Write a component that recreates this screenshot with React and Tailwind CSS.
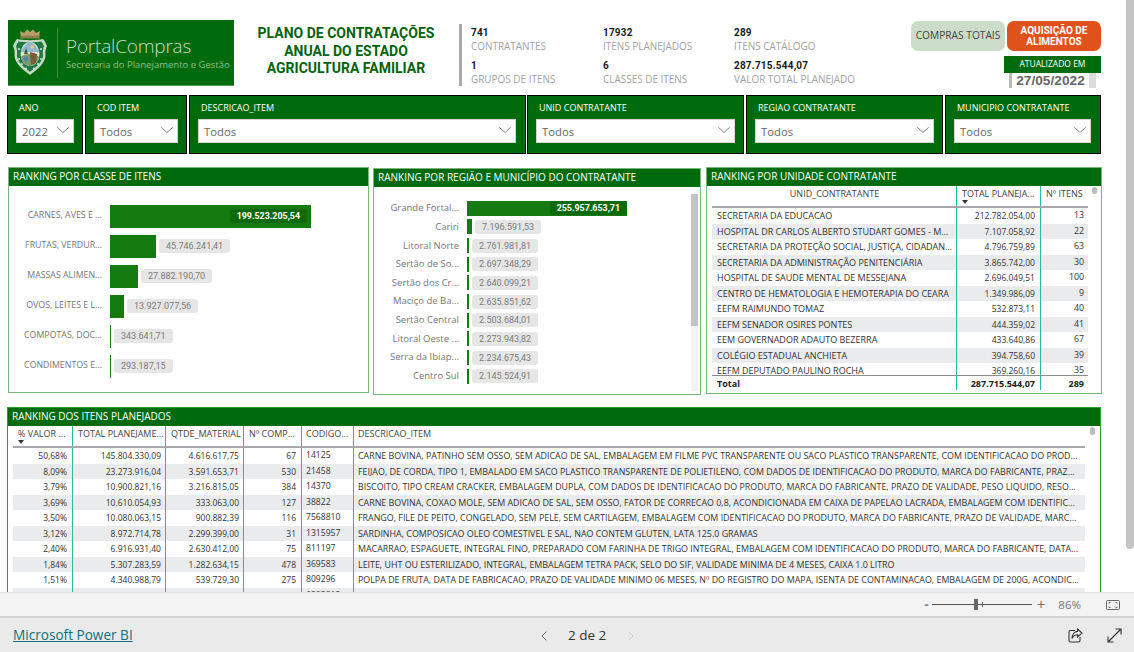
import React from "react";
import { ChevronLeft, ChevronRight } from "lucide-react";

const SEGOE = "font-['Open_Sans','Noto_Sans',sans-serif]";

const slicers = [
  { label: "ANO", value: "2022", outer: "w-[76px]", box: "w-[58px] ml-[8px]" },
  { label: "COD ITEM", value: "Todos", outer: "w-[102px] ml-[2px]", box: "w-[84px] ml-[8px]" },
  { label: "DESCRICAO_ITEM", value: "Todos", outer: "w-[337px] ml-[2px]", box: "w-[318px] ml-[8px]" },
  { label: "UNID CONTRATANTE", value: "Todos", outer: "w-[217px] ml-[1px]", box: "w-[199px] ml-[8px]" },
  { label: "REGIAO CONTRATANTE", value: "Todos", outer: "w-[197px] ml-[2px]", box: "w-[179px] ml-[8px]" },
  { label: "MUNICIPIO CONTRATANTE", value: "Todos", outer: "w-[156px] ml-[2px]", box: "w-[137px] ml-[8px]" },
];

const classes = [
  ["CARNES, AVES E ...", "w-[201px]", "199.523.205,54", true],
  ["FRUTAS, VERDUR...", "w-[46px]", "45.746.241,41"],
  ["MASSAS ALIMEN...", "w-[28px]", "27.882.190,70"],
  ["OVOS, LEITES E L...", "w-[14px]", "13.927.077,56"],
  ["COMPOTAS, DOC...", "w-[1px]", "343.641,71"],
  ["CONDIMENTOS E...", "w-[1px]", "293.187,15"],
];

const regions = [
  ["Grande Fortal...", "w-[160px]", "255.957.653,71", true],
  ["Cariri", "w-[5px]", "7.196.591,53"],
  ["Litoral Norte", "w-[2px]", "2.761.981,81"],
  ["Sertão de So...", "w-[2px]", "2.697.348,29"],
  ["Sertão dos Cr...", "w-[2px]", "2.640.099,21"],
  ["Maciço de Ba...", "w-[2px]", "2.635.851,62"],
  ["Sertão Central", "w-[2px]", "2.503.684,01"],
  ["Litoral Oeste ...", "w-[2px]", "2.273.943,82"],
  ["Serra da Ibiap...", "w-[2px]", "2.234.675,43"],
  ["Centro Sul", "w-[2px]", "2.145.524,91"],
];

const units = [
  ["SECRETARIA DA EDUCACAO", "212.782.054,00", "13"],
  ["HOSPITAL DR CARLOS ALBERTO STUDART GOMES - MESSEJANA", "7.107.058,92", "22"],
  ["SECRETARIA DA PROTEÇÃO SOCIAL, JUSTIÇA, CIDADANIA, MULHERES", "4.796.759,89", "63"],
  ["SECRETARIA DA ADMINISTRAÇÃO PENITENCIÁRIA", "3.865.742,00", "30"],
  ["HOSPITAL DE SAUDE MENTAL DE MESSEJANA", "2.696.049,51", "100"],
  ["CENTRO DE HEMATOLOGIA E HEMOTERAPIA DO CEARA", "1.349.986,09", "9"],
  ["EEFM RAIMUNDO TOMAZ", "532.873,11", "40"],
  ["EEFM SENADOR OSIRES PONTES", "444.359,02", "41"],
  ["EEM GOVERNADOR ADAUTO BEZERRA", "433.640,86", "67"],
  ["COLÉGIO ESTADUAL ANCHIETA", "394.758,60", "39"],
  ["EEFM DEPUTADO PAULINO ROCHA", "369.260,16", "35"],
];

const items = [
  ["50,68%", "145.804.330,09", "4.616.617,75", "67", "14125", "CARNE BOVINA, PATINHO SEM OSSO, SEM ADICAO DE SAL, EMBALAGEM EM FILME PVC TRANSPARENTE OU SACO PLASTICO TRANSPARENTE, COM IDENTIFICACAO DO PRODUTO, MARCA"],
  ["8,09%", "23.273.916,04", "3.591.653,71", "530", "21458", "FEIJAO, DE CORDA, TIPO 1, EMBALADO EM SACO PLASTICO TRANSPARENTE DE POLIETILENO, COM DADOS DE IDENTIFICACAO DO PRODUTO, MARCA DO FABRICANTE, PRAZO DE VALIDADE"],
  ["3,79%", "10.900.821,16", "3.216.815,05", "384", "14370", "BISCOITO, TIPO CREAM CRACKER, EMBALAGEM DUPLA, COM DADOS DE IDENTIFICACAO DO PRODUTO, MARCA DO FABRICANTE, PRAZO DE VALIDADE, PESO LIQUIDO, RESOLUCAO ANVISA"],
  ["3,69%", "10.610.054,93", "333.063,00", "127", "38822", "CARNE BOVINA, COXAO MOLE, SEM ADICAO DE SAL, SEM OSSO, FATOR DE CORRECAO 0,8, ACONDICIONADA EM CAIXA DE PAPELAO LACRADA, EMBALAGEM COM IDENTIFICACAO DO PRODUTO"],
  ["3,50%", "10.080.063,15", "900.882,39", "116", "7568810", "FRANGO, FILE DE PEITO, CONGELADO, SEM PELE, SEM CARTILAGEM, EMBALAGEM COM IDENTIFICACAO DO PRODUTO, MARCA DO FABRICANTE, PRAZO DE VALIDADE, MARCA DO FABRICANTE"],
  ["3,12%", "8.972.714,78", "2.299.399,00", "31", "1315957", "SARDINHA, COMPOSICAO OLEO COMESTIVEL E SAL, NAO CONTEM GLUTEN, LATA 125.0 GRAMAS"],
  ["2,40%", "6.916.931,40", "2.630.412,00", "75", "811197", "MACARRAO, ESPAGUETE, INTEGRAL FINO, PREPARADO COM FARINHA DE TRIGO INTEGRAL, EMBALAGEM COM IDENTIFICACAO DO PRODUTO, MARCA DO FABRICANTE, DATA DE FABRICACAO"],
  ["1,84%", "5.307.283,59", "1.282.634,15", "478", "369583", "LEITE, UHT OU ESTERILIZADO, INTEGRAL, EMBALAGEM TETRA PACK, SELO DO SIF, VALIDADE MINIMA DE 4 MESES, CAIXA 1.0 LITRO"],
  ["1,51%", "4.340.988,79", "539.729,30", "275", "809296", "POLPA DE FRUTA, DATA DE FABRICACAO, PRAZO DE VALIDADE MINIMO 06 MESES, Nº DO REGISTRO DO MAPA, ISENTA DE CONTAMINACAO, EMBALAGEM DE 200G, ACONDICIONADA EM CAIXA"],
  ["1,33%", "3.870.163,83", "161.203,77", "162", "6803812", "POLPA DE FRUTA, CONGELADA, SELECIONADA, ISENTA DE CONTAMINACAO, 10 UNIDADES, ACONDICIONADA EM SACO DE POLIETILENO, CAIXA LACRADA COM PRAZO DE VALIDADE DE FABRICA"],
];

function Crest() {
  return (
    <svg width="36" height="50" viewBox="0 0 36 50" className="shrink-0">
      <path d="M9 9 L8 3 L12 5 L15 1.5 L18 4 L21 1.5 L24 5 L28 3 L27 9 Z" fill="#b9a06a" />
      <rect x="8.5" y="7.5" width="19" height="3" fill="#8f7f52" />
      <path d="M5 11 C10 12.5 26 12.5 31 11 C33 13 34 16 35 18 C33.5 21 33 24 33.5 28 C33 35 26 41 18 47 C10 41 3 35 2.5 28 C3 24 2.5 21 1 18 C2 16 3 13 5 11 Z" fill="#c8d8c4" />
      <path d="M6.5 13.5 C11 14.5 25 14.5 29.5 13.5 C31 16 31.5 17 32 18 C31 21 30.5 24 31 28 C30.5 33.5 24.5 39 18 43.8 C11.5 39 5.5 33.5 5 28 C5.5 24 5 21 4 18 C4.5 17 5 16 6.5 13.5 Z" fill="#1d7a45" />
      <ellipse cx="18" cy="26" rx="9.5" ry="12" fill="#e3e2cd" />
      <path d="M8.5 24 C11 19 15 15 18 14 C21 15 25 19 27.5 24 Z" fill="#8fb6cf" />
      <path d="M8.8 29 C12 25 24 25 27.2 29 C26 34 22 38 18 38 C14 38 10 34 8.8 29 Z" fill="#7c9a68" />
      <path d="M18 24 L25 26 L24 35 L19 37 Z" fill="#7a5a3a" />
      <path d="M12 26 L14 20 L16 26 Z" fill="#3a5f3a" />
      <circle cx="14" cy="31" r="2.4" fill="#4d86b5" />
      <circle cx="20" cy="19" r="1.8" fill="#e9d27a" />
      <g fill="#e8efe6">
        <circle cx="7" cy="31" r="0.9" /><circle cx="10" cy="36" r="0.9" /><circle cx="14" cy="40.5" r="0.9" />
        <circle cx="29" cy="31" r="0.9" /><circle cx="26" cy="36" r="0.9" /><circle cx="22" cy="40.5" r="0.9" />
        <circle cx="7" cy="21" r="0.9" /><circle cx="29" cy="21" r="0.9" />
      </g>
    </svg>
  );
}

function Kpi({ value, label, w }) {
  return (
    <div className={w}>
      <div className="text-[10px] leading-[14px] font-bold text-[#1a1a1a] font-['Roboto',sans-serif] tracking-[0.2px]">{value}</div>
      <div className={`text-[9.95px] leading-[13px] text-[#a3a3a3] whitespace-nowrap ${SEGOE}`}>{label}</div>
    </div>
  );
}

function Slicer({ s }) {
  return (
    <div className={`${s.outer} h-[59px] bg-[#006b0d] border border-black shrink-0`}>
      <div className={`ml-[11px] mt-[4px] h-[19px] text-[9px] leading-[15px] text-white whitespace-nowrap ${SEGOE}`}>{s.label}</div>
      <div className={`${s.box} h-[24px] bg-white flex items-center justify-between pl-[5px] pr-[4px] border border-[#d4d4d4]`}>
        <span className={`text-[11.3px] pt-[2px] text-[#666] ${SEGOE}`}>{s.value}</span>
        <svg width="12" height="6" viewBox="0 0 12 6" fill="none" stroke="#777" strokeWidth="0.9" className="shrink-0 -mt-[2px]">
          <path d="M0.3 0.3L6 5.5L11.7 0.3" />
        </svg>
      </div>
    </div>
  );
}

function PanelHeader({ children }) {
  return (
    <div className={`h-[18px] bg-[#006b0d] text-white text-[10px] leading-[17px] pl-[4px] whitespace-nowrap ${SEGOE}`}>{children}</div>
  );
}

function BarRow({ label, w, value, inside, labelW, rowH, barH, font, insideClass }) {
  return (
    <div className={`flex items-center ${rowH}`}>
      <div className={`${labelW} text-right pr-[8px] ${font} text-[#777] whitespace-nowrap ${SEGOE}`}>{label}</div>
      <div className={`${w} ${barH} bg-[#157a10] relative shrink-0`}>
        {inside && (
          <span className={`absolute ${insideClass} top-1/2 -translate-y-1/2 h-[14px] px-[7px] bg-[#0d6a0a] text-white rounded-[3px] text-[8.9px] leading-[14px] font-bold font-['Roboto',sans-serif] whitespace-nowrap`}>
            {value}
          </span>
        )}
      </div>
      {!inside && (
        <span className="ml-[3px] h-[14px] px-[7px] bg-[#e6e6e6] text-[#7b7b7b] rounded-[3px] text-[9px] leading-[14px] font-['Roboto',sans-serif] whitespace-nowrap">
          {value}
        </span>
      )}
    </div>
  );
}

function UnitTable() {
  return (
    <div className="pl-[5px] relative">
      <div className={`flex h-[22px] border-b-2 border-[#a8a8ac] text-[9px] leading-[15px] text-[#444] w-[376px] ${SEGOE}`}>
        <div className="w-[245px] text-center pl-[1px] border-r border-[#2bb8a6]">UNID_CONTRATANTE</div>
        <div className="w-[84px] pl-[5px] border-r border-[#2bb8a6] relative whitespace-nowrap">
          TOTAL PLANEJA...
          <span className="absolute left-[5px] top-[14px] w-0 h-0 border-l-[3px] border-r-[3px] border-t-[4px] border-l-transparent border-r-transparent border-t-[#333]" />
        </div>
        <div className="w-[47px] pl-[5px] whitespace-nowrap">Nº ITENS</div>
      </div>
      <div className="h-[167px] overflow-hidden w-[376px]">
        {units.map((r, i) => (
          <div key={r[0]} className={`flex h-[15.5px] leading-[15px] text-[#333] ${i % 2 ? "bg-[#eaebec]" : "bg-white"} ${SEGOE}`}>
            <div className="w-[245px] h-full pl-[5px] pr-[3px] truncate text-[9px] border-r border-[#2bb8a6]">{r[0]}</div>
            <div className="w-[84px] h-full text-right pr-[5px] text-[8.5px] border-r border-[#2bb8a6]">{r[1]}</div>
            <div className="w-[47px] text-right pr-[4px] text-[8.8px]">{r[2]}</div>
          </div>
        ))}
      </div>
      <div className={`flex h-[15px] border-t border-[#8c8c90] w-[376px] text-[9px] font-bold leading-[15px] text-[#222] ${SEGOE}`}>
        <div className="w-[245px] pl-[5px] border-r border-[#2bb8a6]">Total</div>
        <div className="w-[84px] text-right pr-[5px] border-r border-[#2bb8a6]">287.715.544,07</div>
        <div className="w-[47px] text-right pr-[4px]">289</div>
      </div>
      <div className="absolute left-[385px] top-[1px] w-[5px] h-[7px] rounded-full bg-[#bbb]" />
    </div>
  );
}

const numCell = "h-full text-right text-[8.5px] border-r border-[#2bb8a6] shrink-0";

function ItemTable() {
  return (
    <div className="pl-[5px] relative">
      <div className={`flex h-[22px] border-b-2 border-[#a8a8ac] text-[9px] leading-[15px] text-[#444] w-[1072px] ${SEGOE}`}>
        <div className="w-[60px] pl-[5px] border-r border-[#2bb8a6] relative whitespace-nowrap">
          % VALOR ...
          <span className="absolute left-[5px] top-[14px] w-0 h-0 border-l-[3px] border-r-[3px] border-t-[4px] border-l-transparent border-r-transparent border-t-[#333]" />
        </div>
        <div className="w-[93px] pl-[5px] border-r border-[#2bb8a6] whitespace-nowrap">TOTAL PLANEJAME...</div>
        <div className="w-[78px] pl-[5px] border-r border-[#2bb8a6] whitespace-nowrap">QTDE_MATERIAL</div>
        <div className="w-[58px] pl-[5px] border-r border-[#2bb8a6] whitespace-nowrap">Nº COMP...</div>
        <div className="w-[52px] pl-[4px] border-r border-[#2bb8a6] whitespace-nowrap">CODIGO...</div>
        <div className="flex-1 pl-[4px]">DESCRICAO_ITEM</div>
      </div>
      {items.map((r, i) => (
        <div key={r[4]} className={`flex w-[1072px] h-[15.5px] leading-[15px] text-[#333] ${i % 2 ? "bg-[#eaebec]" : "bg-white"} ${SEGOE}`}>
          <div className={`w-[60px] pr-[5px] ${numCell}`}>{r[0]}</div>
          <div className={`w-[93px] pr-[4px] ${numCell}`}>{r[1]}</div>
          <div className={`w-[78px] pr-[4px] ${numCell}`}>{r[2]}</div>
          <div className={`w-[58px] pr-[5px] ${numCell}`}>{r[3]}</div>
          <div className="w-[52px] h-full pl-[4px] text-[8.6px] border-r border-[#2bb8a6] shrink-0">{r[4]}</div>
          <div className="flex-1 min-w-0 pl-[4px] pr-[5px] truncate text-[8.9px]">{r[5]}</div>
        </div>
      ))}
      <div className="absolute left-[1082px] top-[1px] w-[5px] h-[8px] rounded-full bg-[#bbb]" />
    </div>
  );
}

export default function App() {
  return (
    <div className="relative w-[1134px] h-[652px] overflow-hidden bg-white">
      <div className="h-[592px] overflow-hidden">
        {/* top row */}
        <div className="flex h-[75px] pt-[20px] pl-[8px]">
          <div className="w-[226px] h-[66px] bg-[#006b0d] border-b border-[#5b9a5b] flex items-center pl-[4px] shrink-0">
            <Crest />
            <div className="w-px h-[50px] bg-[#3f8a45] ml-[9px] mr-[8px]" />
            <div className={`${SEGOE} text-[#c7dfc3] font-light`}>
              <div className="text-[19px] leading-[22px] tracking-[-0.2px]">PortalCompras</div>
              <div className="text-[9.5px] leading-[13px] pt-px text-[#8fbe8c] font-normal whitespace-nowrap">Secretaria do Planejamento e Gestão</div>
            </div>
          </div>
          <div className="w-[224px] pt-[5px] text-center text-[14px] leading-[17.5px] font-bold text-[#03630d] font-['Roboto',sans-serif] shrink-0">
            <div>PLANO DE CONTRATAÇÕES</div>
            <div>ANUAL DO ESTADO</div>
            <div>AGRICULTURA FAMILIAR</div>
          </div>
          <div className="ml-[1px] mt-[4px] w-[3px] h-[62px] bg-[#a9a9a9] shrink-0" />
          <div className="ml-[9px] mt-[6px] w-[440px] shrink-0 flex flex-col gap-[6px]">
            <div className="flex">
              <Kpi value="741" label="CONTRATANTES" w="w-[132px]" />
              <Kpi value="17932" label="ITENS PLANEJADOS" w="w-[131px]" />
              <Kpi value="289" label="ITENS CATÁLOGO" w="w-[177px]" />
            </div>
            <div className="flex">
              <Kpi value="1" label="GRUPOS DE ITENS" w="w-[132px]" />
              <Kpi value="6" label="CLASSES DE ITENS" w="w-[131px]" />
              <Kpi value="287.715.544,07" label="VALOR TOTAL PLANEJADO" w="w-[177px]" />
            </div>
          </div>
          <div className="w-[190px] mt-[1px] shrink-0">
            <div className="flex gap-[2px] h-[30px]">
              <div className={`w-[94px] bg-[#cbdccb] rounded-[7px] flex items-center justify-center text-[10.2px] text-[#444] whitespace-nowrap ${SEGOE}`}>COMPRAS TOTAIS</div>
              <div className="w-[94px] bg-[#e0521c] rounded-[7px] flex items-center justify-center text-center text-[10px] leading-[11px] font-bold text-white font-['Roboto',sans-serif]">AQUISIÇÃO DE<br />ALIMENTOS</div>
            </div>
            <div className="ml-[93px] mt-[5px] w-[97px] h-[17px] bg-[#006b0d] text-white text-center text-[8.5px] leading-[15px] font-['Open_Sans',sans-serif] whitespace-nowrap">ATUALIZADO EM</div>
            <div className="ml-[98px] w-[87px] h-[15px] flex">
              <div className="w-[3px] bg-[#b9b9b9]" />
              <div className="w-[77px] bg-white text-center text-[13.7px] leading-[16px] font-bold text-[#666] font-['Liberation_Sans',sans-serif]">27/05/2022</div>
              <div className="w-[7px] bg-[#dcdcdc]" />
            </div>
          </div>
        </div>

        {/* slicers */}
        <div className="flex pl-[7px] mt-[20px]">
          {slicers.map((s) => <Slicer key={s.label} s={s} />)}
        </div>

        {/* panels */}
        <div className="flex items-start pl-[8px] mt-[13px]">
          <div className="w-[361px] h-[226px] border border-[#79b679] shrink-0">
            <PanelHeader>RANKING POR CLASSE DE ITENS</PanelHeader>
            <div className="pt-[15px]">
              {classes.map((c) => (
                <BarRow key={c[0]} label={c[0]} w={c[1]} value={c[2]} inside={c[3]} labelW="w-[101px]" rowH="h-[30px]" barH="h-[23px]" font="text-[8.8px]" insideClass="right-[4px]" />
              ))}
            </div>
          </div>
          <div className="w-[328px] h-[227px] ml-[4px] mt-[1px] border border-[#79b679] shrink-0 relative">
            <PanelHeader>RANKING POR REGIÃO E MUNICÍPIO DO CONTRATANTE</PanelHeader>
            <div className="pt-[12px]">
              {regions.map((c) => (
                <BarRow key={c[0]} label={c[0]} w={c[1]} value={c[2]} inside={c[3]} labelW="w-[93px]" rowH="h-[18.67px]" barH="h-[15px]" font="text-[9.5px]" insideClass="right-0" />
              ))}
            </div>
            <div className="absolute right-[2px] top-[25px] w-[7px] h-[197px] bg-[#f3f3f3]">
              <div className="h-[132px] bg-[#c4c4c4]" />
            </div>
          </div>
          <div className="w-[396px] h-[227px] ml-[5px] border border-[#79b679] shrink-0">
            <PanelHeader>RANKING POR UNIDADE CONTRATANTE</PanelHeader>
            <UnitTable />
          </div>
        </div>

        {/* items */}
        <div className="ml-[7px] mt-[12px] w-[1094px] h-[200px] border-x border-t border-[#2f9a2f]">
          <PanelHeader>RANKING DOS ITENS PLANEJADOS</PanelHeader>
          <ItemTable />
        </div>
      </div>

      {/* page scrollbar */}
      <div className="absolute right-0 top-0 w-[8px] h-[549px] bg-[#c4c4c4] rounded-b-[4px]" />

      {/* footer */}
      <div className="h-[23px] bg-[#f3f3f3] border-t border-[#e2e2e2] border-b-2 border-b-[#d2d2d2] flex items-center justify-end text-[#777] box-content">
        <span className="text-[13px] font-bold mr-[3px] leading-none">-</span>
        <div className="w-[100px] h-px bg-[#555] relative mr-[5px]">
          <div className="absolute left-[42px] -top-[5px] w-[4px] h-[11px] bg-[#666]" />
          <div className="absolute left-[50px] -top-[2px] w-px h-[5px] bg-[#666]" />
        </div>
        <span className="text-[15px] leading-none mr-[13px]">+</span>
        <span className={`text-[11.5px] mr-[25px] ${SEGOE}`}>86%</span>
        <svg width="14" height="10" viewBox="0 0 14 10" fill="none" stroke="#666" strokeWidth="1" className="mr-[14px]">
          <rect x="0.5" y="0.5" width="13" height="9" rx="1" />
          <path d="M3 3.5V2.5H4.5M9.5 2.5H11V3.5M11 6.5V7.5H9.5M4.5 7.5H3V6.5" />
        </svg>
      </div>
      <div className="h-[35px] bg-[#eaeaea] flex items-center relative">
        <a className={`ml-[13px] text-[13.6px] text-[#10707a] underline ${SEGOE}`}>Microsoft Power BI</a>
        <div className="absolute left-[536px] top-0 h-full flex items-center">
          <ChevronLeft size={16} strokeWidth={1.3} className="text-[#555]" />
          <span className={`ml-[16px] mr-[17px] text-[13.5px] text-[#333] ${SEGOE}`}>2 de 2</span>
          <ChevronRight size={16} strokeWidth={1.3} className="text-[#c8c8c8]" />
        </div>
        <div className="ml-auto flex items-center mr-[12px] gap-[24px]">
          <svg width="15" height="15" viewBox="0 0 15 15" fill="none" stroke="#333" strokeWidth="1.1">
            <path d="M7 2.5H2.5Q1 2.5 1 4V12.5Q1 14 2.5 14H10.5Q12 14 12 12.5V9" />
            <path d="M9.5 1L14 5L9.5 9V6.8C7 6.8 5.2 8 4 10.5C4 7 6 3.8 9.5 3.4Z" />
          </svg>
          <svg width="15" height="15" viewBox="0 0 15 15" fill="none" stroke="#333" strokeWidth="1.1">
            <path d="M1 14L14 1M8.5 1H14V6.5M1 8.5V14H6.5" />
          </svg>
        </div>
      </div>
    </div>
  );
}
